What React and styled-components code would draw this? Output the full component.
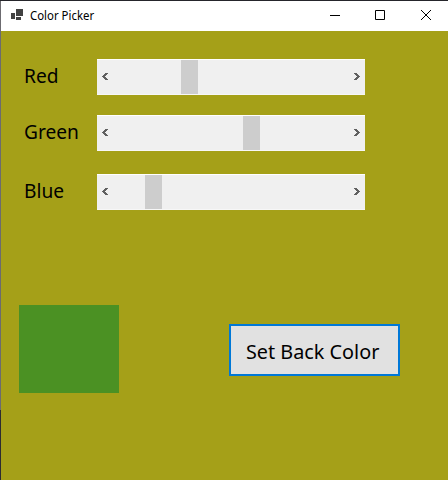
import React from "react";
import styled, { createGlobalStyle } from "styled-components";

const GlobalStyle = createGlobalStyle`
  * { box-sizing: border-box; }
  body { margin: 0; overflow: hidden; background: #a5a018; }
`;

const Window = styled.main`
  width: 448px;
  height: 480px;
  display: flex;
  flex-direction: column;
  border-top: 1px solid #25252b;
  background: linear-gradient(#6c6b70 0 409px, #2d2c31 409px);
  padding-left: 1px;
  font-family: "Noto Sans", "Open Sans", sans-serif;
  color: #000;
`;

const TitleBar = styled.header`
  height: 30px;
  flex: none;
  display: flex;
  align-items: flex-start;
  padding-left: 10px;
  background: #fff;
`;

const Text = styled.span`
  display: block;
  white-space: nowrap;
  font-size: ${(p) => p.$size}px;
  line-height: 30px;
  transform: scaleX(${(p) => p.$stretch});
  transform-origin: left center;
`;

const Title = styled.div`
  flex: 1;
  padding-left: 7px;
`;

const Controls = styled.div`
  display: flex;
  padding: 9px 17px 0 0;
`;

const Glyph = styled.svg`
  display: block;
  flex: none;
`;

const WindowIcon = styled(Glyph)`
  width: 10px;
  height: 10px;
  margin-left: ${(p) => p.$space || 0}px;
`;

const ProgramIcon = styled(Glyph)`
  margin-top: 8px;
`;

const Body = styled.section`
  flex: 1;
  background: #a5a018;
  padding-top: 28px;
`;

const ChannelRow = styled.div`
  display: flex;
  height: 36px;
  margin-bottom: ${(p) => p.$gap}px;
  padding-left: 23px;
`;

const Label = styled.label`
  width: 73px;
  padding-top: 1px;
`;

const ScrollBar = styled.div`
  width: 268px;
  height: 36px;
  display: flex;
  align-items: flex-start;
  background: #f0f0f0;
  border-top: 1px solid #fff;
  border-bottom: 1px solid #f7f7f7;
  padding: 0 5px;
`;

const ArrowIcon = styled(Glyph)`
  margin-top: 13px;
`;

const Track = styled.div`
  flex: 1;
  height: 34px;
  padding-left: ${(p) => p.$offset}px;
`;

const Thumb = styled.div`
  width: 17px;
  height: 34px;
  background: #cdcdcd;
`;

const Footer = styled.div`
  display: flex;
  align-items: flex-start;
  padding-left: 18px;
`;

const Swatch = styled.div`
  width: 100px;
  height: 88px;
  background: #4b9123;
`;

const SetButton = styled.button`
  width: 171px;
  height: 52px;
  margin: 19px 0 0 110px;
  padding: 2px 0 0 15px;
  border: 2px solid #0078d7;
  background: #e1e1e1;
  color: #000;
  font-family: inherit;
  text-align: left;
`;

const channels = [
  { name: "Red", offset: 73, gap: 20 },
  { name: "Green", offset: 135, gap: 23 },
  { name: "Blue", offset: 37, gap: 95 },
];

function Arrow({ right }) {
  return (
    <ArrowIcon width="6" height="7" viewBox="0 0 6 7" shapeRendering="crispEdges">
      <path
        transform={right ? "translate(6 0) scale(-1 1)" : undefined}
        fill="#606060"
        d="M3 0h3v1H5v1H4v1H3v1h1v1h1v1h1v1H3V6H2V5H1V4H0V3h1V2h1V1h1z"
      />
    </ArrowIcon>
  );
}

function AppIcon() {
  return (
    <ProgramIcon width="12" height="11" viewBox="0 0 12 11" fill="#424242" shapeRendering="crispEdges">
      <path d="M5 0h7v7H5zM0 4h4v6H0zM5 8h5v3H5z" />
    </ProgramIcon>
  );
}

export default function App() {
  return (
    <>
      <GlobalStyle />
      <Window>
        <TitleBar>
          <AppIcon />
          <Title><Text $size={12} $stretch={0.95}>Color Picker</Text></Title>
          <Controls>
            <WindowIcon viewBox="0 0 10 10"><path d="M0 5.5h10" stroke="#000" /></WindowIcon>
            <WindowIcon $space={35} viewBox="0 0 10 10"><path d="M.5.5h9v9h-9z" fill="none" stroke="#000" /></WindowIcon>
            <WindowIcon $space={36} viewBox="0 0 10 10"><path d="M0 0l10 10M10 0L0 10" stroke="#000" /></WindowIcon>
          </Controls>
        </TitleBar>
        <Body>
          {channels.map((c) => (
            <ChannelRow key={c.name} $gap={c.gap}>
              <Label><Text $size={20.5} $stretch={0.935}>{c.name}</Text></Label>
              <ScrollBar>
                <Arrow />
                <Track $offset={c.offset}><Thumb /></Track>
                <Arrow right />
              </ScrollBar>
            </ChannelRow>
          ))}
          <Footer>
            <Swatch />
            <SetButton><Text $size={20.5} $stretch={0.966}>Set Back Color</Text></SetButton>
          </Footer>
        </Body>
      </Window>
    </>
  );
}
